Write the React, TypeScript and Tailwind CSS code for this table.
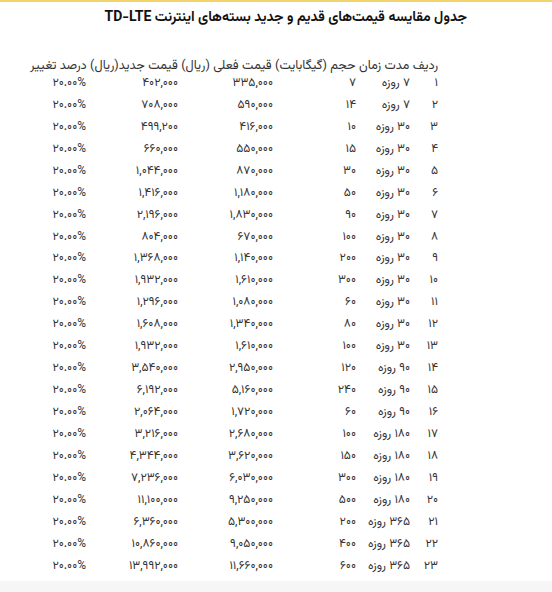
import React from 'react';

const rows: [string, string, string, string, string, string][] = [
  ['۱', '۷ روزه', '۷', '۳۳۵,۰۰۰', '۴۰۲,۰۰۰', '۲۰.۰۰%'],
  ['۲', '۷ روزه', '۱۴', '۵۹۰,۰۰۰', '۷۰۸,۰۰۰', '۲۰.۰۰%'],
  ['۳', '۳۰ روزه', '۱۰', '۴۱۶,۰۰۰', '۴۹۹,۲۰۰', '۲۰.۰۰%'],
  ['۴', '۳۰ روزه', '۱۵', '۵۵۰,۰۰۰', '۶۶۰,۰۰۰', '۲۰.۰۰%'],
  ['۵', '۳۰ روزه', '۳۰', '۸۷۰,۰۰۰', '۱,۰۴۴,۰۰۰', '۲۰.۰۰%'],
  ['۶', '۳۰ روزه', '۵۰', '۱,۱۸۰,۰۰۰', '۱,۴۱۶,۰۰۰', '۲۰.۰۰%'],
  ['۷', '۳۰ روزه', '۹۰', '۱,۸۳۰,۰۰۰', '۲,۱۹۶,۰۰۰', '۲۰.۰۰%'],
  ['۸', '۳۰ روزه', '۱۰۰', '۶۷۰,۰۰۰', '۸۰۴,۰۰۰', '۲۰.۰۰%'],
  ['۹', '۳۰ روزه', '۲۰۰', '۱,۱۴۰,۰۰۰', '۱,۳۶۸,۰۰۰', '۲۰.۰۰%'],
  ['۱۰', '۳۰ روزه', '۳۰۰', '۱,۶۱۰,۰۰۰', '۱,۹۳۲,۰۰۰', '۲۰.۰۰%'],
  ['۱۱', '۳۰ روزه', '۶۰', '۱,۰۸۰,۰۰۰', '۱,۲۹۶,۰۰۰', '۲۰.۰۰%'],
  ['۱۲', '۳۰ روزه', '۸۰', '۱,۳۴۰,۰۰۰', '۱,۶۰۸,۰۰۰', '۲۰.۰۰%'],
  ['۱۳', '۳۰ روزه', '۱۰۰', '۱,۶۱۰,۰۰۰', '۱,۹۳۲,۰۰۰', '۲۰.۰۰%'],
  ['۱۴', '۹۰ روزه', '۱۲۰', '۲,۹۵۰,۰۰۰', '۳,۵۴۰,۰۰۰', '۲۰.۰۰%'],
  ['۱۵', '۹۰ روزه', '۲۴۰', '۵,۱۶۰,۰۰۰', '۶,۱۹۲,۰۰۰', '۲۰.۰۰%'],
  ['۱۶', '۹۰ روزه', '۶۰', '۱,۷۲۰,۰۰۰', '۲,۰۶۴,۰۰۰', '۲۰.۰۰%'],
  ['۱۷', '۱۸۰ روزه', '۱۰۰', '۲,۶۸۰,۰۰۰', '۳,۲۱۶,۰۰۰', '۲۰.۰۰%'],
  ['۱۸', '۱۸۰ روزه', '۱۵۰', '۳,۶۲۰,۰۰۰', '۴,۳۴۴,۰۰۰', '۲۰.۰۰%'],
  ['۱۹', '۱۸۰ روزه', '۳۰۰', '۶,۰۳۰,۰۰۰', '۷,۲۳۶,۰۰۰', '۲۰.۰۰%'],
  ['۲۰', '۱۸۰ روزه', '۵۰۰', '۹,۲۵۰,۰۰۰', '۱۱,۱۰۰,۰۰۰', '۲۰.۰۰%'],
  ['۲۱', '۳۶۵ روزه', '۲۰۰', '۵,۳۰۰,۰۰۰', '۶,۳۶۰,۰۰۰', '۲۰.۰۰%'],
  ['۲۲', '۳۶۵ روزه', '۴۰۰', '۹,۰۵۰,۰۰۰', '۱۰,۸۶۰,۰۰۰', '۲۰.۰۰%'],
  ['۲۳', '۳۶۵ روزه', '۶۰۰', '۱۱,۶۶۰,۰۰۰', '۱۳,۹۹۲,۰۰۰', '۲۰.۰۰%'],
];

export default function App() {
  return (
    <div
      dir="rtl"
      className="w-[552px] h-[592px] bg-white border-t-2 border-[#f0d36a] text-[#333] overflow-hidden"
      style={{ fontFamily: '"Vazirmatn", "Noto Sans Arabic", "DejaVu Sans", sans-serif' }}
    >
      <h1 className="pr-[85px] pt-[4px] text-[14px] leading-[24px] font-bold text-[#111] whitespace-nowrap">
        جدول مقایسه قیمت‌های قدیم و جدید بسته‌های اینترنت TD-LTE
      </h1>
      <div className="pr-[114px] mt-[29px]">
        <p className="text-[12.75px] leading-[14px] -mb-[1px] whitespace-nowrap">
          ردیف مدت زمان حجم (گیگابایت) قیمت فعلی (ریال) قیمت جدید(ریال) درصد تغییر
        </p>
        <div className="text-[12px] leading-[14px]">
          {rows.map((r) => (
            <div key={r[0]} className="flex h-[21.95px] items-center whitespace-nowrap">
              <span className="w-[28px] shrink-0">{r[0]}</span>
              <span className="w-[54px] shrink-0">{r[1]}</span>
              <span className="w-[83px] shrink-0">{r[2]}</span>
              <span className="w-[95px] shrink-0">{r[3]}</span>
              <span className="w-[92px] shrink-0">{r[4]}</span>
              <span className="shrink-0">{r[5]}</span>
            </div>
          ))}
        </div>
      </div>
      <div className="mt-[4px] h-[20px] bg-[#f6f6f6]" />
    </div>
  );
}
